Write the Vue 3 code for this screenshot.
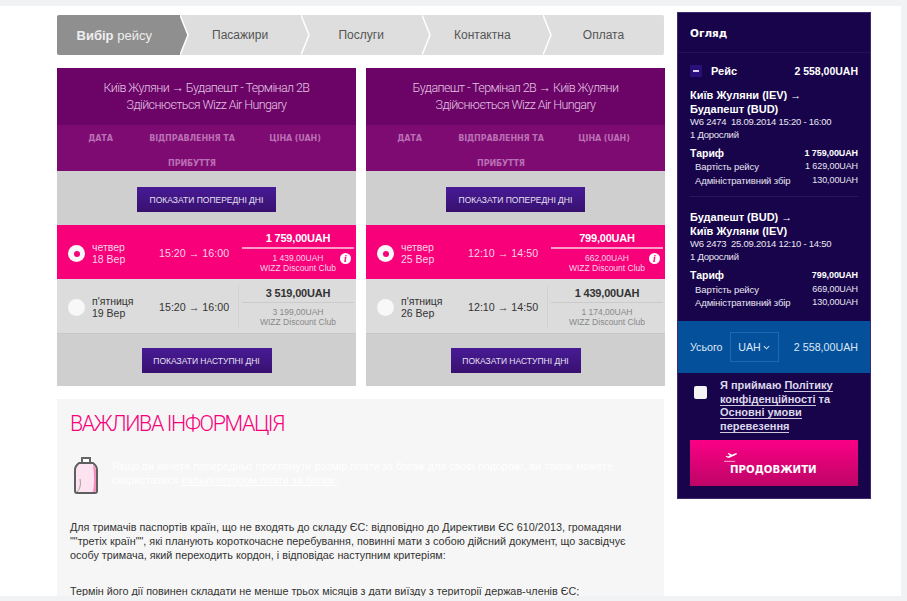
<template>
  <div class="page">
    <div class="sheet">
      <main class="main">
        <nav class="steps">
          <div v-for="(s, i) in steps" :key="s" class="step" :class="{ active: i === 0 }">
            <span v-if="i === 0" class="step-label"><b>Вибір</b> рейсу</span>
            <span v-else class="step-label">{{ s }}</span>
            <svg v-if="i < steps.length - 1" class="chev" viewBox="0 0 10 40" width="10" height="40">
              <polygon v-if="i === 0" points="0,0 8,20 0,40" fill="#8f8f8f" />
              <polyline points="0,0 8,20 0,40" fill="none" stroke="#fff" stroke-width="1.5" />
            </svg>
          </div>
        </nav>

        <div class="flights">
          <section v-for="f in flights" :key="f.route" class="flight">
            <header class="flight-head">
              <div>{{ f.route }}</div>
              <div>Здійснюється Wizz Air Hungary</div>
            </header>
            <div class="cols">
              <span>ДАТА</span>
              <span>ВІДПРАВЛЕННЯ ТА</span>
              <span class="col-price">ЦІНА (UAH)</span>
              <span></span>
              <span>ПРИБУТТЯ</span>
            </div>
            <div class="more more-top">
              <button class="more-btn prev">ПОКАЗАТИ ПОПЕРЕДНІ ДНІ</button>
            </div>
            <div v-for="d in f.days" :key="d.date" class="day" :class="{ selected: d.selected }">
              <span class="radio"><i v-if="d.selected"></i></span>
              <div class="date">
                <div>{{ d.weekday }}</div>
                <div>{{ d.date }}</div>
              </div>
              <div class="time">{{ f.time }}</div>
              <div class="price">
                <div class="price-main">{{ d.price }}</div>
                <div class="price-club">
                  <div>{{ d.club }}</div>
                  <div>WIZZ Discount Club</div>
                  <span v-if="d.selected" class="info">i</span>
                </div>
              </div>
            </div>
            <div class="more more-bottom">
              <button class="more-btn next">ПОКАЗАТИ НАСТУПНІ ДНІ</button>
            </div>
          </section>
        </div>

        <section class="notice">
          <h2>ВАЖЛИВА ІНФОРМАЦІЯ</h2>
          <div class="bag-row">
            <svg class="bag" viewBox="0 0 24 37" width="24" height="37">
              <path d="M8 7V1h8v6" fill="#fff" stroke="#666" stroke-width="2" />
              <path d="M3 36Q1 36 1 34V13Q1 9 5 6h14q4 3 4 7v21q0 2-2 2z" fill="#fde3ef" stroke="#5f5f5f" stroke-width="2" />
              <path d="M3 35c3-3 4-7 3-13" fill="none" stroke="#999" stroke-width="1" />
              <path d="M19 8q2 14 0 27h2q1 0 1-1V13q0-3-3-5z" fill="#f48fc0" />
            </svg>
            <p>
              Якщо ви хочете попередньо проглянути розмір плати за багаж для своєї подорожі, ви також можете
              скористатися <u>калькулятором плати за багаж </u>.
            </p>
          </div>
          <p class="para">
            Для тримачів паспортів країн, що не входять до складу ЄС: відповідно до Директиви ЄС 610/2013, громадяни
            ""третіх країн"", які планують короткочасне перебування, повинні мати з собою дійсний документ, що засвідчує
            особу тримача, який переходить кордон, і відповідає наступним критеріям:
          </p>
          <p class="para para-next">
            Термін його дії повинен складати не менше трьох місяців з дати виїзду з території держав-членів ЄС;
          </p>
        </section>
      </main>

      <aside class="side">
        <h3>Огляд</h3>
        <div class="side-body">
          <div class="trip-row">
            <span class="minus"></span>
            <span class="trip-name">Рейс</span>
            <span class="trip-total">2 558,00UAH</span>
          </div>
          <div v-for="(t, i) in trips" :key="t.code" class="trip" :class="{ last: i === trips.length - 1 }">
            <div class="trip-title">{{ t.from }} →<br>{{ t.to }}</div>
            <div class="trip-meta">{{ t.code }} &nbsp;{{ t.when }}</div>
            <div class="trip-pax">1 Дорослий</div>
            <div class="line strong"><span>Тариф</span><span class="amount">{{ t.fare }}</span></div>
            <div class="line sub"><span>Вартість рейсу</span><span class="amount">{{ t.base }}</span></div>
            <div class="line sub"><span>Адміністративний збір</span><span class="amount">130,00UAH</span></div>
          </div>
        </div>
        <div class="total">
          <span>Усього</span>
          <span class="currency">UAH
            <svg viewBox="0 0 8 5" width="7" height="5"><path d="M1 1l3 3 3-3" fill="none" stroke="#cfe2f5" stroke-width="1.200" /></svg>
          </span>
          <span class="total-sum">2 558,00UAH</span>
        </div>
        <div class="agree">
          <span class="check"></span>
          <p>Я приймаю <a>Політику конфіденційності</a> та <a>Основні умови</a> <a>перевезення</a></p>
        </div>
        <button class="go">
          <svg viewBox="0 0 20 16" width="14" height="11">
            <path d="M2 7.500l1.500-.5 2 1 3-1.500L5 3.500l1.500-.5 5 2.500 4-2q2.500-.8 3.500 0-.2 1-2.500 2.200L7 10 4.500 9.500z" fill="#fff" />
            <path d="M0 15h16" stroke="#fff" stroke-width="1" />
          </svg>
          <span>ПРОДОВЖИТИ</span>
        </button>
      </aside>
    </div>
  </div>
</template>

<script setup>
const steps = ['Вибір рейсу', 'Пасажири', 'Послуги', 'Контактна', 'Оплата']

const flights = [
  {
    route: 'Київ Жуляни → Будапешт - Термінал 2B',
    time: '15:20 → 16:00',
    days: [
      { weekday: 'четвер', date: '18 Вер', price: '1 759,00UAH', club: '1 439,00UAH', selected: true },
      { weekday: "п'ятниця", date: '19 Вер', price: '3 519,00UAH', club: '3 199,00UAH', selected: false }
    ]
  },
  {
    route: 'Будапешт - Термінал 2B → Київ Жуляни',
    time: '12:10 → 14:50',
    days: [
      { weekday: 'четвер', date: '25 Вер', price: '799,00UAH', club: '662,00UAH', selected: true },
      { weekday: "п'ятниця", date: '26 Вер', price: '1 439,00UAH', club: '1 174,00UAH', selected: false }
    ]
  }
]

const trips = [
  { from: 'Київ Жуляни (IEV)', to: 'Будапешт (BUD)', code: 'W6 2474', when: '18.09.2014 15:20 - 16:00', fare: '1 759,00UAH', base: '1 629,00UAH' },
  { from: 'Будапешт (BUD)', to: 'Київ Жуляни (IEV)', code: 'W6 2473', when: '25.09.2014 12:10 - 14:50', fare: '799,00UAH', base: '669,00UAH' }
]
</script>

<style>
body {
  margin: 0;
  background: #f1f2f4;
}
</style>

<style scoped>
.page {
  width: 907px;
  height: 601px;
  overflow: hidden;
  background: #f1f2f4;
  font-family: "Liberation Sans", Arial, sans-serif;
  font-size: 12px;
  color: #333;
}

.sheet {
  display: flex;
  align-items: flex-start;
  width: 901px;
  height: 590px;
  margin-top: 6px;
  box-sizing: border-box;
  padding: 6px 0 0 57px;
  background: #fff;
  overflow: hidden;
}

.main {
  width: 608px;
  padding-top: 3px;
}

.steps {
  display: flex;
  width: 607px;
  height: 40px;
  background: #dedede;
  border-radius: 2px;
}

.step {
  position: relative;
  flex: 1;
  display: flex;
  align-items: center;
  justify-content: center;
  font-size: 12px;
  color: #555;
}

.step.active {
  flex: 0 0 122.500px;
  padding-right: 8px;
  box-sizing: border-box;
  background: #8f8f8f;
  color: #eee;
  font-size: 13px;
  border-radius: 2px 0 0 2px;
}

.chev {
  position: absolute;
  left: 100%;
  top: 0;
  z-index: 1;
}

.flights {
  display: flex;
  gap: 10px;
  margin-top: 13px;
}

.flight {
  width: 299px;
  background: #cfcfcf;
}

.flight-head {
  height: 57px;
  box-sizing: border-box;
  padding-top: 12px;
  background: #6c0468;
  color: #e3c4e1;
  font-family: Roboto, "Liberation Sans", sans-serif;
  font-weight: 300;
  font-size: 12.500px;
  letter-spacing: -0.6px;
  line-height: 16.500px;
  text-align: center;
}

.cols {
  display: grid;
  grid-template-columns: 87px 96px 110px;
  height: 46px;
  box-sizing: border-box;
  padding-top: 2px;
  background: #7d0b72;
  color: #bb6fb4;
  font-family: "DejaVu Sans", sans-serif;
  font-weight: 700;
  font-size: 8px;
  letter-spacing: -0.1px;
  line-height: 24.500px;
  text-align: center;
  white-space: nowrap;
}

.more {
  display: flex;
  justify-content: center;
  background: #cfcfcf;
}

.more-top {
  height: 54px;
  padding-top: 16px;
  box-sizing: border-box;
}

.more-bottom {
  height: 52px;
  padding-top: 14px;
  box-sizing: border-box;
}

.more-btn {
  height: 25px;
  padding: 0;
  border: 0;
  background: linear-gradient(#481b96, #38106f);
  color: #e6e0f0;
  font-family: "Liberation Sans", sans-serif;
  font-size: 8.500px;
  letter-spacing: 0;
}

.prev {
  width: 139px;
}

.next {
  width: 130px;
}

.day {
  display: flex;
  align-items: center;
  height: 54px;
  background: #dcdcdc;
  border-bottom: 1px solid #c8c8c8;
}

.day.selected {
  border-bottom: 0;
  background: #f7007a;
  color: #fbd3e6;
}

.radio {
  display: flex;
  align-items: center;
  justify-content: center;
  width: 17px;
  height: 17px;
  margin: 3px 0 0 11px;
  border-radius: 50%;
  background: #f8f8f8;
}

.radio i {
  width: 6px;
  height: 6px;
  border-radius: 50%;
  background: #f7007a;
}

.date {
  width: 67px;
  margin: 2px 0 0 7px;
  line-height: 12px;
  font-size: 10.500px;
}

.time {
  width: 79px;
  margin-top: 2px;
  font-size: 10.700px;
}

.price {
  flex: 1;
  align-self: stretch;
  display: flex;
  flex-direction: column;
  margin: 6px 2px 5px 0;
  padding-left: 3px;
  border-left: 1px solid #d2d2d2;
  text-align: center;
}

.selected .price {
  margin: 0 2px 0 0;
  border-left: 0;
  padding-left: 4px;
}

.price-main {
  height: 17px;
  border-bottom: 1px solid #cbcbcb;
  font-size: 11px;
  letter-spacing: -0.2px;
  font-weight: 700;
  line-height: 16px;
}

.selected .price-main {
  height: 22px;
  line-height: 26px;
  border-bottom: 2px solid #fb9cc9;
  color: #fff;
}

.price-club {
  position: relative;
  padding-top: 4px;
  font-size: 8.500px;
  line-height: 10px;
  color: #888;
}

.selected .price-club {
  color: #fbd3e6;
}

.info {
  position: absolute;
  right: 3px;
  top: 4px;
  width: 11px;
  height: 11px;
  border-radius: 50%;
  background: #fff;
  color: #f7007a;
  font-family: "Liberation Serif", serif;
  font-style: italic;
  font-weight: 700;
  font-size: 10px;
  line-height: 11px;
}

.notice {
  width: 607px;
  height: 200px;
  margin-top: 13px;
  padding: 12px 20px 0 13px;
  background: #f6f6f6;
  box-sizing: border-box;
}

h2 {
  margin: 0;
  color: #f7007a;
  font-family: Roboto, "Liberation Sans", sans-serif;
  font-weight: 300;
  font-size: 21.500px;
  letter-spacing: -1.4px;
  line-height: 26px;
  white-space: nowrap;
}

.bag-row {
  display: flex;
  gap: 14px;
  margin-top: 20px;
  padding-left: 4px;
}

.bag-row p {
  margin: 0;
  color: #fff;
  font-size: 10.800px;
  line-height: 14px;
  padding-top: 2px;
  width: 505px;
}

.para {
  margin: 26px 0 0;
  font-size: 10.800px;
  line-height: 14px;
  color: #333;
}

.para-next {
  margin-top: 22px;
}

.side {
  width: 194px;
  height: 487px;
  margin-left: 12px;
  background: #17044a;
  border: 1px solid #3b2a6e;
  box-sizing: border-box;
  color: #e9e6f2;
  font-size: 9.500px;
  letter-spacing: -0.1px;
}

h3 {
  height: 40px;
  margin: 0;
  padding-left: 12px;
  border-bottom: 1px solid #241059;
  box-sizing: border-box;
  color: #fff;
  font-family: "DejaVu Sans", sans-serif;
  font-size: 10.500px;
  font-weight: 700;
  line-height: 40px;
  letter-spacing: 0;
}

.side-body {
  height: 268px;
  padding: 11px 12px 0;
  box-sizing: border-box;
}

.trip-row {
  display: flex;
  align-items: center;
  height: 14px;
  font-size: 11px;
  font-weight: 700;
  color: #fff;
  letter-spacing: 0;
}

.minus {
  position: relative;
  width: 12px;
  height: 12px;
  background: #2a0f7a;
  border-radius: 1px;
}

.minus::after {
  content: "";
  position: absolute;
  left: 3px;
  right: 3px;
  top: 5px;
  height: 2px;
  background: #d9d2ec;
}

.trip-name {
  margin-left: 9px;
}

.trip-total {
  margin-left: auto;
  font-size: 10.500px;
}

.trip {
  margin-top: 11px;
  padding-bottom: 9px;
  border-bottom: 1px solid #2a1662;
}

.trip.last {
  margin-top: 14px;
  border-bottom: 0;
}

.trip-title {
  font-size: 11px;
  font-weight: 700;
  line-height: 13.500px;
  letter-spacing: 0;
  color: #fff;
}

.trip-meta {
  font-size: 9.500px;
  letter-spacing: -0.25px;
  line-height: 11px;
}

.trip-pax {
  margin: 2px 0 6px;
  font-size: 9.500px;
  letter-spacing: -0.25px;
  line-height: 12px;
}

.line {
  display: flex;
  justify-content: space-between;
  line-height: 13.400px;
}

.amount {
  font-size: 9px;
  letter-spacing: -0.1px;
}

.strong {
  font-size: 10.500px;
  font-weight: 700;
  letter-spacing: 0;
  color: #fff;
}

.sub {
  padding-left: 5px;
}

.total {
  display: flex;
  align-items: center;
  height: 52px;
  padding: 0 12px;
  box-sizing: border-box;
  background: #04509b;
  color: #dbe8f5;
  font-size: 10.700px;
  letter-spacing: 0;
}

.currency {
  display: flex;
  align-items: center;
  justify-content: center;
  gap: 2px;
  width: 49px;
  height: 30px;
  margin-left: 7px;
  border: 1px solid #1c6ab4;
  box-sizing: border-box;
}

.total-sum {
  margin-left: auto;
}

.agree {
  display: flex;
  height: 67px;
  padding: 6px 8px 0 16px;
  box-sizing: border-box;
}

.check {
  flex: none;
  width: 13px;
  height: 13px;
  margin-top: 7px;
  border-radius: 2px;
  background: #f5f5f5;
}

.agree p {
  margin: 0 0 0 13px;
  font-size: 11px;
  font-weight: 700;
  line-height: 13.500px;
  letter-spacing: 0;
  color: #ddd8ea;
}

.agree a {
  border-bottom: 1px solid #cfc9e0;
}

.go {
  display: flex;
  flex-direction: column;
  align-items: flex-start;
  width: 168px;
  height: 46px;
  margin-left: 12px;
  padding: 11px 0 0 40px;
  border: 0;
  box-sizing: border-box;
  background: linear-gradient(#fb0085, #bd0567);
  color: #fff;
  font-family: "DejaVu Sans", sans-serif;
  font-size: 10.200px;
  font-weight: 700;
  line-height: 12px;
  text-align: left;
}

.go svg {
  margin-left: -6px;
  margin-bottom: 2px;
}
</style>
